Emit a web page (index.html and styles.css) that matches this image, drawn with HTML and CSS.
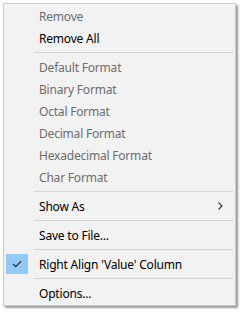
FILE: index.html
```html
<!DOCTYPE html>
<html>
<head>
    <meta charset="UTF-8">
    <title>Context Menu</title>
    <link rel="stylesheet" href="styles.css">
</head>
<body>
<div class="menu">
    <div class="menu-item disabled">Remove</div>
    <div class="menu-item">Remove All</div>
    <div class="separator"></div>
    <div class="menu-item disabled">Default Format</div>
    <div class="menu-item disabled">Binary Format</div>
    <div class="menu-item disabled">Octal Format</div>
    <div class="menu-item disabled">Decimal Format</div>
    <div class="menu-item disabled">Hexadecimal Format</div>
    <div class="menu-item disabled">Char Format</div>
    <div class="separator"></div>
    <div class="menu-item">Show As
        <svg class="arrow" width="5" height="8" viewBox="0 0 5 8">
            <path d="M0.5 0.5 L4 4 L0.5 7.5" fill="none" stroke="#333" stroke-width="1.1"/>
        </svg>
    </div>
    <div class="separator"></div>
    <div class="menu-item">Save to File...</div>
    <div class="separator"></div>
    <div class="menu-item checked">
        <span class="check">
            <svg width="10" height="8" viewBox="0 0 10 8">
                <path d="M1 4 L3.8 6.6 L9 1.2" fill="none" stroke="#333" stroke-width="1.3"/>
            </svg>
        </span>
        Right Align 'Value' Column
    </div>
    <div class="separator"></div>
    <div class="menu-item">Options...</div>
</div>
</body>
</html>
```

FILE: styles.css
```css
body {
    margin: 0;
    padding: 3px;
    background-color: #fff;
    font-family: "Noto Sans", "Open Sans", sans-serif;
    font-size: 12px;
    letter-spacing: -0.2px;
}

.menu {
    box-sizing: content-box;
    width: 227px;
    padding: 1px 2px;
    border: 1px solid #cccccc;
    background-color: #f2f2f2;
    box-shadow: 2px 2px 2px rgba(0, 0, 0, 0.4);
}

.menu-item {
    position: relative;
    box-sizing: border-box;
    height: 22px;
    padding-top: 2px;
    line-height: 20px;
    padding-left: 33px;
    color: #000;
    white-space: nowrap;
}

.menu-item.disabled {
    color: #6d6d6d;
}

.separator {
    height: 1px;
    margin: 3px 0 3px 28px;
    background-color: #d7d7d7;
}

.arrow {
    position: absolute;
    right: 10px;
    top: 7px;
}

.check {
    position: absolute;
    left: 0;
    top: 1px;
    width: 22px;
    height: 20px;
    background-color: #91c9f7;
    display: flex;
    align-items: center;
    justify-content: center;
}
```
